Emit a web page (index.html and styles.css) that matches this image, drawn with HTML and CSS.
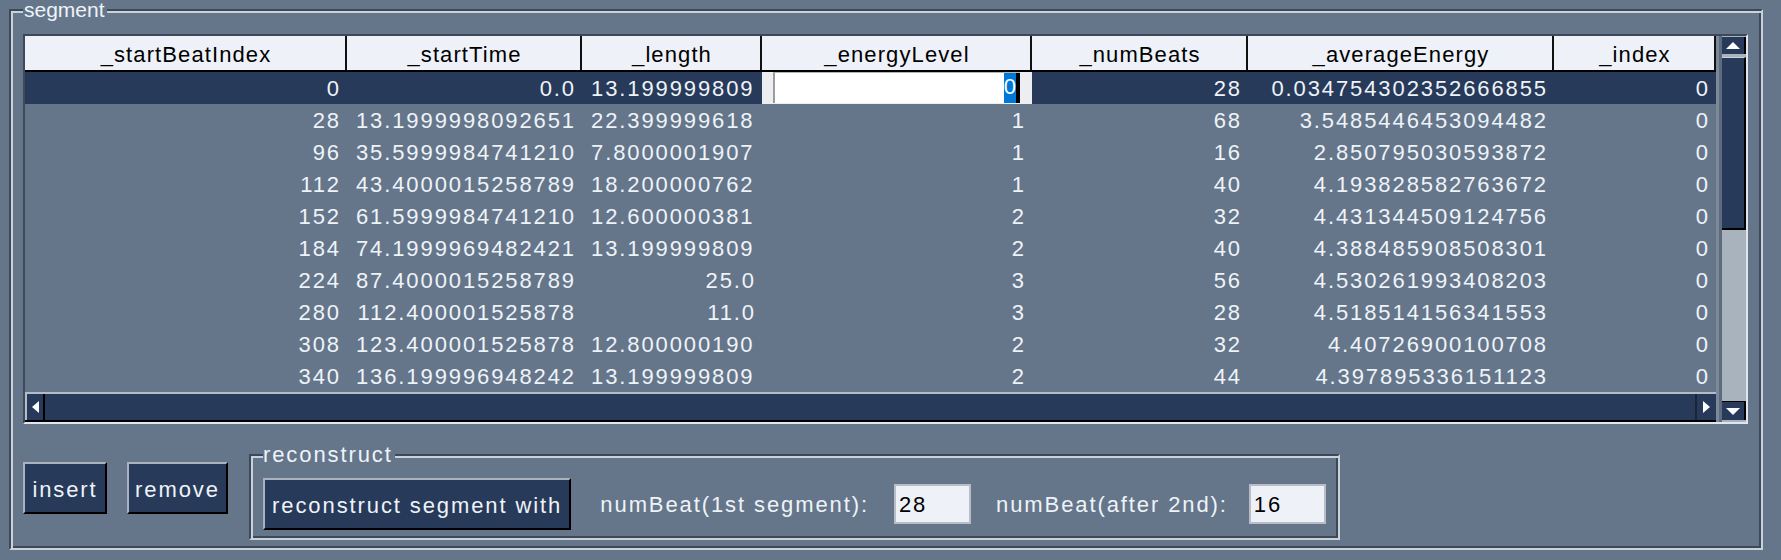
FILE: index.html
```html
<!DOCTYPE html>
<html>
<head>
<meta charset="utf-8">
<title>segment</title>
<link rel="stylesheet" href="styles.css">
</head>
<body>
<fieldset class="etched seg">
  <legend class="seg-title">segment</legend>
  <div class="pane">
    <div class="main">
      <div class="thead">
        <div class="th c1">_startBeatIndex</div>
        <div class="th c2">_startTime</div>
        <div class="th c3">_length</div>
        <div class="th c4">_energyLevel</div>
        <div class="th c5">_numBeats</div>
        <div class="th c6">_averageEnergy</div>
        <div class="th c7">_index</div>
      </div>
      <div class="tbody">
        <div class="tr sel">
          <div class="td c1">0</div>
          <div class="td c2">0.0</div>
          <div class="td c3 ov">13.199999809265137</div>
          <div class="td c4 edit"><div class="editor"><span class="hl">0</span><span class="caret"></span></div></div>
          <div class="td c5">28</div>
          <div class="td c6">0.034754302352666855</div>
          <div class="td c7">0</div>
        </div>
        <div class="tr">
          <div class="td c1">28</div>
          <div class="td c2">13.1999998092651</div>
          <div class="td c3 ov">22.399999618530273</div>
          <div class="td c4">1</div>
          <div class="td c5">68</div>
          <div class="td c6">3.5485446453094482</div>
          <div class="td c7">0</div>
        </div>
        <div class="tr">
          <div class="td c1">96</div>
          <div class="td c2">35.5999984741210</div>
          <div class="td c3 ov">7.800000190734863</div>
          <div class="td c4">1</div>
          <div class="td c5">16</div>
          <div class="td c6">2.850795030593872</div>
          <div class="td c7">0</div>
        </div>
        <div class="tr">
          <div class="td c1">112</div>
          <div class="td c2">43.4000015258789</div>
          <div class="td c3 ov">18.200000762939453</div>
          <div class="td c4">1</div>
          <div class="td c5">40</div>
          <div class="td c6">4.193828582763672</div>
          <div class="td c7">0</div>
        </div>
        <div class="tr">
          <div class="td c1">152</div>
          <div class="td c2">61.5999984741210</div>
          <div class="td c3 ov">12.600000381469727</div>
          <div class="td c4">2</div>
          <div class="td c5">32</div>
          <div class="td c6">4.431344509124756</div>
          <div class="td c7">0</div>
        </div>
        <div class="tr">
          <div class="td c1">184</div>
          <div class="td c2">74.1999969482421</div>
          <div class="td c3 ov">13.199999809265137</div>
          <div class="td c4">2</div>
          <div class="td c5">40</div>
          <div class="td c6">4.388485908508301</div>
          <div class="td c7">0</div>
        </div>
        <div class="tr">
          <div class="td c1">224</div>
          <div class="td c2">87.4000015258789</div>
          <div class="td c3">25.0</div>
          <div class="td c4">3</div>
          <div class="td c5">56</div>
          <div class="td c6">4.530261993408203</div>
          <div class="td c7">0</div>
        </div>
        <div class="tr">
          <div class="td c1">280</div>
          <div class="td c2">112.400001525878</div>
          <div class="td c3">11.0</div>
          <div class="td c4">3</div>
          <div class="td c5">28</div>
          <div class="td c6">4.518514156341553</div>
          <div class="td c7">0</div>
        </div>
        <div class="tr">
          <div class="td c1">308</div>
          <div class="td c2">123.400001525878</div>
          <div class="td c3 ov">12.800000190734863</div>
          <div class="td c4">2</div>
          <div class="td c5">32</div>
          <div class="td c6">4.40726900100708</div>
          <div class="td c7">0</div>
        </div>
        <div class="tr">
          <div class="td c1">340</div>
          <div class="td c2">136.199996948242</div>
          <div class="td c3 ov">13.199999809265137</div>
          <div class="td c4">2</div>
          <div class="td c5">44</div>
          <div class="td c6">4.397895336151123</div>
          <div class="td c7">0</div>
        </div>
      </div>
      <div class="hbar">
        <div class="harrow left"><svg width="7" height="12" viewBox="0 0 7 12"><path d="M0 6 L7 0 L7 12 Z" fill="#ffffff"/></svg></div>
        <div class="htrack"></div>
        <div class="harrow right"><svg width="7" height="12" viewBox="0 0 7 12"><path d="M7 6 L0 0 L0 12 Z" fill="#ffffff"/></svg></div>
      </div>
    </div>
    <div class="gap"></div>
    <div class="vbar">
      <div class="varrow up"><svg width="14" height="7" viewBox="0 0 14 7"><path d="M7 0 L14 7 L0 7 Z" fill="#ffffff"/></svg></div>
      <div class="vgap"></div>
      <div class="thumb"></div>
      <div class="vtrack"></div>
      <div class="varrow down"><svg width="14" height="7" viewBox="0 0 14 7"><path d="M7 7 L14 0 L0 0 Z" fill="#ffffff"/></svg></div>
    </div>
  </div>
  <div class="actions">
    <button class="btn b-insert">insert</button>
    <button class="btn b-remove">remove</button>
    <fieldset class="etched rec">
      <legend class="rec-title">reconstruct</legend>
      <div class="rec-row">
        <button class="btn b-rec">reconstruct segment with</button>
        <span class="lbl lbl-first">numBeat(1st segment):</span>
        <div class="field">28</div>
        <span class="lbl">numBeat(after 2nd):</span>
        <div class="field field-last">16</div>
      </div>
    </fieldset>
  </div>
</fieldset>
</body>
</html>
```

FILE: styles.css
```css
* { box-sizing: border-box; }

html, body {
  margin: 0;
  padding: 0;
}

body {
  width: 1781px;
  height: 560px;
  overflow: hidden;
  background: #65768b;
  font-family: "Liberation Sans", Arial, sans-serif;
  font-size: 22px;
  letter-spacing: 1.9px;
  color: #eef3f8;
}

/* etched group borders */
.etched {
  border: 2px solid;
  border-color: #3d4859 #c9d1da #c9d1da #3d4859;
  box-shadow: inset 2px 2px 0 #c9d1da, inset -2px -2px 0 #3d4859;
  min-width: 0;
}

.etched > legend {
  height: 20px;
  line-height: 20px;
  background: #65768b;
  color: #eef3f8;
}

.seg {
  margin: 0 0 0 9px;
  width: 1754px;
  height: 550px;
  padding: 14px 12px 0 12px;
}

.seg-title {
  padding: 0 2px 0 1px;
  font-size: 21px;
  letter-spacing: 0;
}

/* scroll pane */
.pane {
  display: flex;
  width: 1725px;
  height: 390px;
  border: 2px solid;
  border-color: #3d4859 #dfe6ee #dfe6ee #3d4859;
}

.main {
  width: 1691px;
  display: flex;
  flex-direction: column;
}

.thead {
  display: flex;
  height: 36px;
  background: #eef2f8;
  border-bottom: 2px solid #000;
}

.th {
  color: #000;
  text-align: center;
  border-right: 2px solid #111;
  padding: 3px 0 0 2px;
  line-height: 31px;
  letter-spacing: 1.1px;
  white-space: nowrap;
  overflow: hidden;
}

.c1 { width: 322px; }
.c2 { width: 235px; }
.c3 { width: 180px; }
.c4 { width: 270px; }
.c5 { width: 216px; }
.c6 { width: 306px; }
.c7 { width: 162px; }

.tbody {
  height: 320px;
}

.tr {
  display: flex;
  height: 32px;
}

.tr.sel {
  background: #273a5a;
}

.td {
  text-align: right;
  padding: 2px 6px 0 8px;
  line-height: 30px;
  white-space: nowrap;
  overflow: hidden;
}

.td.ov {
  text-align: left;
  padding-left: 9px;
  padding-right: 0;
  border-right: 9px solid transparent;
}

.td.edit {
  background: #eceef2;
  padding: 0 12px 0 11px;
}

.editor {
  height: 31px;
  background: #ffffff;
  border-left: 2px solid #9c9c9c;
  border-top: 1px solid #b4b4b4;
  display: flex;
  justify-content: flex-end;
  align-items: stretch;
}

.hl {
  background: #0078d7;
  color: #ffffff;
  letter-spacing: 0;
  line-height: 28px;
}

.caret {
  width: 4px;
  background: #000;
}

/* horizontal scrollbar */
.hbar {
  display: flex;
  height: 30px;
  background: #273a5a;
  border-top: 2px solid #b3bcc7;
  border-bottom: 2px solid #000;
}

.harrow {
  display: flex;
  align-items: center;
  justify-content: center;
  background: #273a5a;
}

.harrow.left {
  width: 20px;
  border-right: 2px solid #000;
  border-left: 2px solid #b3bcc7;
}

.harrow.right {
  width: 21px;
  border-left: 2px solid #1a2537;
}

.htrack {
  flex: 1;
}

.gap {
  width: 6px;
  background: linear-gradient(to right, #7d8898 0, #7d8898 3px, #5d6b7e 3px);
}

/* vertical scrollbar */
.vbar {
  width: 24px;
  display: flex;
  flex-direction: column;
  background: #a9b3be;
  padding: 1px 0 2px 0;
}

.varrow {
  display: flex;
  align-items: center;
  justify-content: center;
  background: #273a5a;
  border-right: 2px solid #000;
}

.varrow.up {
  height: 17px;
}

.varrow.down {
  height: 19px;
  border-top: 1px solid #000;
  margin-top: 1px;
}

.vgap {
  height: 3px;
}

.thumb {
  height: 173px;
  background: #273a5a;
  border-right: 2px solid #000;
  border-bottom: 2px solid #000;
  border-top: 1px solid #c9d1da;
}

.vtrack {
  flex: 1;
}

/* bottom actions */
.actions {
  display: flex;
  align-items: flex-start;
  margin-top: 21px;
}

.btn {
  font: inherit;
  letter-spacing: inherit;
  color: #eef3f8;
  background: #273a5a;
  border: 2px solid;
  border-color: #a9b2be #000 #000 #a9b2be;
  height: 52px;
  padding: 3px 0 0 0;
  margin: 0;
  text-align: center;
  white-space: nowrap;
}

.b-insert {
  width: 84px;
  margin-top: 17px;
}

.b-remove {
  width: 101px;
  margin-top: 17px;
  margin-left: 20px;
}

.rec {
  margin: 0 0 0 21px;
  width: 1091px;
  height: 95px;
  padding: 13px 12px 8px 12px;
}

.rec-title {
  padding: 0 2px 0 0;
}

.rec-row {
  display: flex;
  align-items: center;
  gap: 25px;
}

.b-rec {
  width: 312px;
}

.lbl {
  white-space: nowrap;
  padding-top: 2px;
}

.lbl-first {
  margin-left: 4px;
}

.field {
  width: 78px;
  height: 40px;
  background: #eef2f8;
  border: 2px solid #b9bec6;
  color: #000;
  padding-left: 3px;
  line-height: 37px;
}

.field-last {
  margin-left: -4px;
}
```
